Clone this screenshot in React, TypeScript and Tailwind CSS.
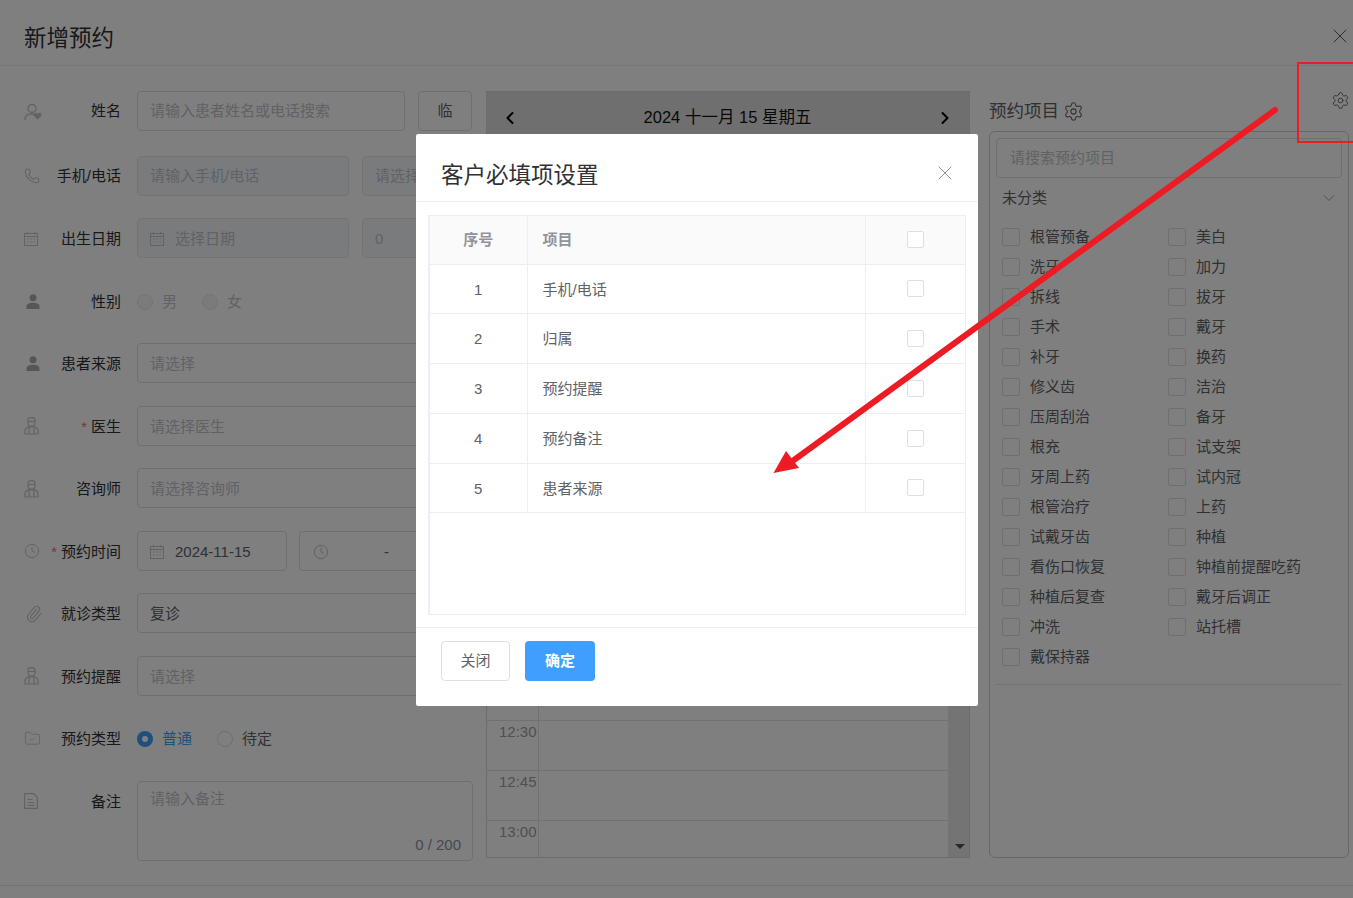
import React from 'react';
import { ChevronDown, ChevronLeft, ChevronRight, Clock, FolderCheck, Paperclip, Phone, Settings, X } from 'lucide-react';

const ICON = '#c6c6c6';

const UserHeartIcon = () => (
  <svg width="19" height="18" viewBox="0 0 19 18" fill="none" stroke={ICON} strokeWidth="1.4">
    <circle cx="8" cy="5.5" r="4" />
    <path d="M1 17c0-4 2.500-6 6-6 1 0 2 .2 2.800.6" />
    <path d="M13.500 15.500l-3-2.800c-1.200-1.400.8-3 2-1.800l1 .8 1-.8c1.200-1.200 3.200.4 2 1.800z" fill={ICON} />
  </svg>
);

const CalendarIcon = ({ color = ICON }: { color?: string }) => (
  <svg width="14" height="14" viewBox="0 0 14 14" fill="none" stroke={color} strokeWidth="1">
    <rect x="0.500" y="1.500" width="13" height="12" />
    <path d="M0.500 4.500h13M3.500 0v2.500M10.500 0v2.500" />
    <path d="M3 7h1.500M6.300 7h1.500M9.500 7h1.500M3 10h1.500M6.300 10h1.500M9.500 10h1.500" />
  </svg>
);

const PersonIcon = () => (
  <svg width="14" height="15" viewBox="0 0 14 15" fill="#adadad" className="ml-[2px]">
    <circle cx="7" cy="3.800" r="3.500" />
    <path d="M0.500 15v-2.500C0.500 10 3 8.800 7 8.800s6.500 1.200 6.500 3.700V15z" />
  </svg>
);

const DoctorIcon = () => (
  <svg width="15" height="18" viewBox="0 0 15 18" fill="none" stroke={ICON} strokeWidth="1.200">
    <path d="M4 5.500V3c0-1.500 1.500-2.400 3.500-2.400S11 1.500 11 3v2.500c0 2.200-1.500 3.700-3.500 3.700S4 7.700 4 5.500z" />
    <path d="M4 4.500h7" />
    <path d="M1 17v-3.500c0-2 1.800-3.200 4-3.600h5c2.200.4 4 1.600 4 3.600V17zM5 10v7M10 10v7" />
  </svg>
);

const NoteIcon = () => (
  <svg width="14" height="16" viewBox="0 0 14 16" fill="none" stroke={ICON} strokeWidth="1.200">
    <path d="M0.600 0.600h9l3.800 3.800v11H0.600z" />
    <path d="M3.500 6.500h5M3.500 9.500h7M3.500 12.300h7" />
  </svg>
);

const leftRows: { key: string; icon: React.ReactNode; label: string; required?: boolean; field: React.ReactNode; extra?: string }[] = [
  {
    key: 'name',
    icon: <UserHeartIcon />,
    label: '姓名',
    extra: 'mb-[2.4px]',
    field: (
      <div className="flex gap-[13px]">
        <div className="flex h-[40px] w-[268px] items-center rounded border border-[#dcdfe6] px-[12px] text-[#c0c4cc]">
          请输入患者姓名或电话搜索
        </div>
        <div className="flex h-[40px] w-[54px] items-center justify-center rounded border border-[#dcdfe6] text-[#606266]">临</div>
      </div>
    ),
  },
  {
    key: 'phone',
    icon: <Phone size={16} color={ICON} strokeWidth={1.6} />,
    label: '手机/电话',
    field: (
      <div className="flex gap-[13px]">
        <div className="flex h-[40px] w-[212px] items-center rounded border border-[#e4e7ed] bg-[#f5f7fa] px-[12px] text-[#c0c4cc]">
          请输入手机/电话
        </div>
        <div className="flex h-[40px] w-[110px] items-center rounded border border-[#e4e7ed] bg-[#f5f7fa] px-[12px] text-[#c0c4cc]">
          请选择
        </div>
      </div>
    ),
  },
  {
    key: 'birth',
    icon: <CalendarIcon />,
    label: '出生日期',
    field: (
      <div className="flex gap-[13px]">
        <div className="flex h-[40px] w-[212px] items-center gap-[11px] rounded border border-[#e4e7ed] bg-[#f5f7fa] px-[12px] pt-[2px] text-[#c0c4cc]">
          <CalendarIcon color="#c0c4cc" />
          选择日期
        </div>
        <div className="flex h-[40px] w-[110px] items-center rounded border border-[#e4e7ed] bg-[#f5f7fa] px-[12px] pt-[2px] text-[#c0c4cc]">0</div>
      </div>
    ),
  },
  {
    key: 'gender',
    icon: <PersonIcon />,
    label: '性别',
    field: (
      <div className="flex h-[40px] items-center pt-[2px]">
        <span className="h-[16px] w-[16px] rounded-full border border-[#e4e7ed] bg-[#f5f7fa]" />
        <span className="ml-[9px] w-[40px] text-[#c0c4cc]">男</span>
        <span className="h-[16px] w-[16px] rounded-full border border-[#e4e7ed] bg-[#f5f7fa]" />
        <span className="ml-[9px] text-[#c0c4cc]">女</span>
      </div>
    ),
  },
  { key: 'source', icon: <PersonIcon />, label: '患者来源', field: <SelectBox text="请选择" /> },
  { key: 'doctor', icon: <DoctorIcon />, label: '医生', required: true, field: <SelectBox text="请选择医生" /> },
  { key: 'consultant', icon: <DoctorIcon />, label: '咨询师', field: <SelectBox text="请选择咨询师" /> },
  {
    key: 'time',
    icon: <Clock size={16} color={ICON} strokeWidth={1.5} />,
    label: '预约时间',
    required: true,
    field: (
      <div className="flex gap-[12px]">
        <div className="flex h-[40px] w-[150px] items-center gap-[11px] rounded border border-[#dcdfe6] px-[12px] pt-[2px] text-[#606266]">
          <CalendarIcon color="#c0c4cc" />
          2024-11-15
        </div>
        <div className="flex h-[40px] w-[173px] items-center rounded border border-[#dcdfe6] px-[13px] pt-[2px] text-[#606266]">
          <Clock size={16} color="#c0c4cc" strokeWidth={1.5} />
          <span className="ml-[55px]">-</span>
        </div>
      </div>
    ),
  },
  {
    key: 'visit',
    icon: <Paperclip size={18} color={ICON} strokeWidth={1.5} className="ml-[1px] rotate-[-5deg]" />,
    label: '就诊类型',
    field: <SelectBox text="复诊" dark />,
  },
  { key: 'remind', icon: <DoctorIcon />, label: '预约提醒', field: <SelectBox text="请选择" /> },
  {
    key: 'type',
    icon: <FolderCheck size={17} color={ICON} strokeWidth={1.3} />,
    label: '预约类型',
    field: (
      <div className="flex h-[40px] items-center pt-[2px]">
        <span className="flex h-[16px] w-[16px] items-center justify-center rounded-full bg-[#409eff]">
          <span className="h-[6px] w-[6px] rounded-full bg-white" />
        </span>
        <span className="ml-[9px] w-[55px] text-[#409eff]">普通</span>
        <span className="h-[16px] w-[16px] rounded-full border border-[#dcdfe6]" />
        <span className="ml-[9px] text-[#606266]">待定</span>
      </div>
    ),
  },
];

function SelectBox({ text, dark }: { text: string; dark?: boolean }) {
  return (
    <div className={`flex h-[40px] w-[335px] items-center rounded border border-[#dcdfe6] px-[12px] pt-[2px] ${dark ? 'text-[#606266]' : 'text-[#c0c4cc]'}`}>
      {text}
    </div>
  );
}

// rows behind the dialog stay unlabelled
const times = ['', '', '', '', '', '', '', '', '', '', '', '12:30', '12:45', '13:00'];

const items = [
  ['根管预备', '美白'],
  ['洗牙', '加力'],
  ['拆线', '拔牙'],
  ['手术', '戴牙'],
  ['补牙', '换药'],
  ['修义齿', '洁治'],
  ['压周刮治', '备牙'],
  ['根充', '试支架'],
  ['牙周上药', '试内冠'],
  ['根管治疗', '上药'],
  ['试戴牙齿', '种植'],
  ['看伤口恢复', '钟植前提醒吃药'],
  ['种植后复查', '戴牙后调正'],
  ['冲洗', '站托槽'],
  ['戴保持器', ''],
];

const requiredFields = ['手机/电话', '归属', '预约提醒', '预约备注', '患者来源'];
const rowHeights = ['h-[49px]', 'h-[50px]', 'h-[50px]', 'h-[50px]', 'h-[49px]'];

const Box = () => <span className="block h-[17px] w-[17px] rounded-[2px] border border-[#dcdfe6] bg-white" />;

export default function App() {
  return (
    <div className="relative h-[898px] w-[1353px] overflow-hidden bg-white font-['Liberation_Sans','Noto_Sans_CJK_SC',sans-serif] text-[15px] text-[#303133]">
      {/* Page underneath the dialog */}
      <header className="flex h-[66px] items-center justify-between border-b border-[#ebeef5] pl-[24px] pr-[1px] pt-[12px]">
        <h1 className="text-[22.5px] font-normal">新增预约</h1>
        <X size={24} color="#606266" strokeWidth={1} className="mb-[6px]" />
      </header>

      <div className="flex pt-[25px]">
        {/* Form */}
        <div className="flex w-[486px] flex-col gap-[22.5px] pl-[24px]">
          {leftRows.map((row, i) => (
            <div key={row.key} className={`flex h-[40px] items-center ${row.extra ?? ''}`}>
              <span className="flex w-[20px] justify-start pt-[1px]">{row.icon}</span>
              <span className={`mr-[16px] w-[77px] whitespace-nowrap text-right ${i >= 2 ? 'pt-[2px]' : ''}`}>
                {row.required && <span className="mr-[4px] text-[#f56c6c]">*</span>}
                {row.label}
              </span>
              {row.field}
            </div>
          ))}
          <div className="flex items-start">
            <span className="flex w-[20px] pt-[12px]"><NoteIcon /></span>
            <span className="mr-[16px] w-[77px] pt-[10px] text-right">备注</span>
            <div className="relative h-[80px] w-[336px] rounded border border-[#dcdfe6] px-[12px] py-[6px] text-[#c0c4cc]">
              请输入备注
              <span className="absolute bottom-[3px] right-[11px] text-[#909399]">0 / 200</span>
            </div>
          </div>
        </div>

        {/* Schedule */}
        <div className="flex h-[767px] w-[484px] flex-col overflow-hidden border border-[#d8d8d8]">
          <div className="flex h-[49px] shrink-0 items-center justify-between bg-[#dedede] pl-[13px] pr-[14px] pt-[2px] text-[#000]">
            <ChevronLeft size={20} strokeWidth={2.4} />
            <span className="text-[16.5px] text-[#111]">2024 十一月 15 星期五</span>
            <ChevronRight size={20} strokeWidth={2.4} />
          </div>
          <div className="flex min-h-0 flex-1">
            <div className="flex-1 pt-[29px]">
              {times.map((t, i) => (
                <div key={i} className="flex h-[50px] border-t border-[#e3e3e3]">
                  <span className="w-[52px] border-r border-[#e3e3e3] pl-[12px] text-[#a0a0a0]">{t}</span>
                </div>
              ))}
            </div>
            <div className="relative w-[21px] bg-[#e8e8e8]">
              <span className="absolute bottom-[8px] left-[7px] h-0 w-0 border-x-[5px] border-t-[5px] border-x-transparent border-t-[#505050]" />
            </div>
          </div>
        </div>

        {/* Project list */}
        <div className="ml-[19px] w-[360px]">
          <div className="flex h-[40px] items-center gap-[4px] text-[17.5px] text-[#606266]">
            预约项目
            <Settings size={21} color="#606266" strokeWidth={1.2} />
          </div>
          <div className="flex h-[727px] flex-col rounded-[6px] border border-[#cfcfcf] px-[6px] pt-[6px]">
            <div className="flex h-[40px] items-center rounded border border-[#dcdfe6] px-[13px] text-[#c0c4cc]">请搜索预约项目</div>
            <div className="mt-[9px] flex h-[22px] items-center justify-between pl-[6px] pr-[3px] text-[#606266]">
              未分类
              <ChevronDown size={20} color="#909399" strokeWidth={1} />
            </div>
            <div className="flex flex-col border-b border-[#e4e7ed] pb-[12px] pt-[13px]">
              {items.map(([a, b]) => (
                <div key={a} className="flex h-[30px] items-center pl-[6px] text-[#606266]">
                  <div className="flex w-[166px] items-center gap-[10px]">
                    <span className="h-[18px] w-[18px] rounded-[2px] border border-[#dcdfe6]" />
                    {a}
                  </div>
                  {b && (
                    <div className="flex items-center gap-[10px]">
                      <span className="h-[18px] w-[18px] rounded-[2px] border border-[#dcdfe6]" />
                      {b}
                    </div>
                  )}
                </div>
              ))}
            </div>
          </div>
        </div>
      </div>

      <div className="absolute bottom-[12px] left-0 w-full border-t border-[#e6e6e6]" />

      {/* Mask */}
      <div className="absolute inset-0 bg-black/50" />

      {/* Settings icon pasted into the annotation */}
      <Settings size={19} color="#333" strokeWidth={1.2} className="absolute left-[1331px] top-[91px]" />

      {/* Dialog */}
      <div className="absolute left-[416px] top-[134px] flex h-[572px] w-[562px] flex-col rounded-[2px] bg-white text-[#606266]">
        <div className="flex h-[68px] shrink-0 items-center justify-between border-b border-[#ebeef5] pl-[25px] pr-[21px] pt-[16px]">
          <h2 className="text-[22.5px] font-normal text-[#303133]">客户必填项设置</h2>
          <X size={24} color="#909399" strokeWidth={1} className="mb-[6px]" />
        </div>
        <div className="ml-[12px] mt-[13px] h-[400px] w-[538px] border border-l-2 border-[#ebeef5]">
          <table className="w-[535px] table-fixed border-collapse">
            <colgroup>
              <col className="w-[97px]" />
              <col className="w-[338px]" />
              <col />
            </colgroup>
            <thead>
              <tr className="h-[48px] border-b border-[#ebeef5] bg-[#fafafa] font-bold text-[#909399]">
                <th className="border-r border-[#ebeef5] text-center">序号</th>
                <th className="border-r border-[#ebeef5] pl-[15px] text-left">项目</th>
                <th><span className="flex justify-center"><Box /></span></th>
              </tr>
            </thead>
            <tbody>
              {requiredFields.map((name, i) => (
                <tr key={name} className={`${rowHeights[i]} border-b border-[#ebeef5]`}>
                  <td className="border-r border-[#ebeef5] pt-[3px] text-center">{i + 1}</td>
                  <td className="border-r border-[#ebeef5] pl-[15px] pt-[3px]">{name}</td>
                  <td><span className="flex justify-center"><Box /></span></td>
                </tr>
              ))}
            </tbody>
          </table>
        </div>
        <div className="mt-[12px] flex flex-1 gap-[15px] border-t border-[#ebeef5] pl-[25px] pt-[13px]">
          <button className="h-[40px] w-[69px] rounded border border-[#dcdfe6] bg-white text-[#606266]">关闭</button>
          <button className="h-[40px] w-[70px] rounded bg-[#409eff] font-bold text-white">确定</button>
        </div>
      </div>

      {/* Red annotation */}
      <div className="absolute left-[1297px] top-[62px] h-[81px] w-[60px] border-2 border-[#ed1c24]" />
      <svg className="pointer-events-none absolute inset-0" width="1353" height="898" viewBox="0 0 1353 898">
        <line x1="1275" y1="110" x2="794" y2="460" stroke="#ed1c24" strokeWidth="6" strokeLinecap="round" />
        <polygon points="773.500,473 786,451 799,468" fill="#ed1c24" />
      </svg>
    </div>
  );
}
